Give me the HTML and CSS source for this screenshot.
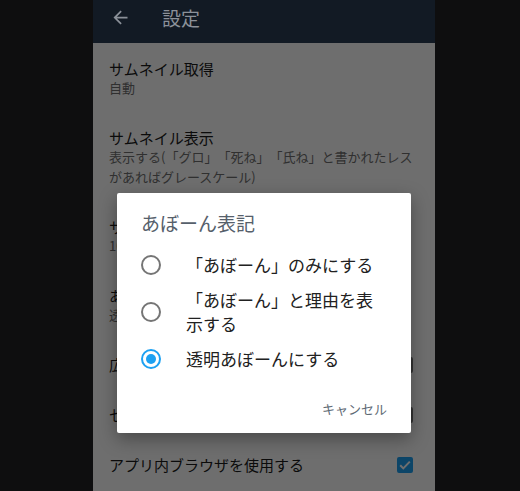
FILE: index.html
```html
<!DOCTYPE html>
<html lang="ja">
<head>
<meta charset="utf-8">
<title>設定</title>
<link rel="stylesheet" href="styles.css">
</head>
<body>
<div class="screen">
  <header class="appbar">
    <svg class="back" viewBox="0 0 24 24" aria-hidden="true"><path d="M20 11H7.83l5.59-5.59L12 4l-8 8 8 8 1.41-1.41L7.83 13H20v-2z"/></svg>
    <span class="appbar-title">設定</span>
  </header>
  <ul class="prefs">
    <li class="pref">
      <div class="pref-text">
        <div class="pref-title">サムネイル取得</div>
        <div class="pref-summary">自動</div>
      </div>
    </li>
    <li class="pref">
      <div class="pref-text">
        <div class="pref-title">サムネイル表示</div>
        <div class="pref-summary">表示する(「グロ」「死ね」「氏ね」と書かれたレスがあればグレースケール)</div>
      </div>
    </li>
    <li class="pref">
      <div class="pref-text">
        <div class="pref-title">サムネイルサイズ</div>
        <div class="pref-summary">100</div>
      </div>
    </li>
    <li class="pref">
      <div class="pref-text">
        <div class="pref-title">あぼーん表記</div>
        <div class="pref-summary">透明あぼーんにする</div>
      </div>
    </li>
    <li class="pref pref-single">
      <div class="pref-text"><div class="pref-title">広告を表示しない</div></div>
      <span class="checkbox"></span>
    </li>
    <li class="pref pref-single">
      <div class="pref-text"><div class="pref-title">セッションを保持する</div></div>
      <span class="checkbox"></span>
    </li>
    <li class="pref pref-single">
      <div class="pref-text"><div class="pref-title">アプリ内ブラウザを使用する</div></div>
      <span class="checkbox checkbox-on"><svg viewBox="0 0 16 16" aria-hidden="true"><path d="M3.2 8.3l3.1 3.1 6.5-6.8"/></svg></span>
    </li>
  </ul>
  <div class="scrim"></div>
  <div class="dialog" role="dialog">
    <h2 class="dialog-title">あぼーん表記</h2>
    <ul class="options">
      <li class="option"><span class="radio"></span><span class="option-label">「あぼーん」のみにする</span></li>
      <li class="option"><span class="radio"></span><span class="option-label">「あぼーん」と理由を表示する</span></li>
      <li class="option"><span class="radio radio-on"></span><span class="option-label">透明あぼーんにする</span></li>
    </ul>
    <div class="actions">
      <button class="btn">キャンセル</button>
    </div>
  </div>
</div>
</body>
</html>
```
FILE: styles.css
```css
* { box-sizing: border-box; }
body {
  margin: 0;
  background: #0e0e0f;
  font-family: "Noto Sans CJK JP", "Noto Sans", sans-serif;
  text-spacing-trim: space-all;
}
.screen {
  position: relative;
  width: 342px;
  height: 491px;
  margin-left: 93px;
  background: #fff;
  overflow: hidden;
}
.appbar {
  height: 43px;
  background: #121a24;
  display: flex;
  align-items: center;
  padding: 0 0 8px 17px;
}
.back {
  width: 21px;
  height: 21px;
  fill: #8a9098;
  flex: none;
}
.appbar-title {
  margin-left: 31px;
  font-size: 19px;
  line-height: 24px;
  color: #8b9199;
}
.prefs {
  list-style: none;
  margin: 0;
  padding: 0;
}
.pref {
  display: flex;
  align-items: center;
  padding: 17px 16px 14px 16px;
}
.pref-single {
  padding-bottom: 15px;
}
.pref-text {
  flex: 1;
  min-width: 0;
}
.pref-title {
  font-size: 15px;
  line-height: 18px;
  color: #1a1a1a;
  white-space: nowrap;
}
.pref-summary {
  font-size: 13px;
  line-height: 20px;
  color: #6f6f6f;
}
.checkbox {
  flex: none;
  width: 16px;
  height: 16px;
  margin-right: 6px;
  border: 2px solid #757575;
  border-radius: 2px;
  display: flex;
  align-items: center;
  justify-content: center;
}
.checkbox-on {
  background: #1da1f2;
  border-color: #1da1f2;
}
.checkbox svg {
  width: 16px;
  height: 16px;
  flex: none;
  fill: none;
  stroke: #fff;
  stroke-width: 2;
}
.scrim {
  position: absolute;
  top: 43px;
  left: 0;
  right: 0;
  bottom: 0;
  background: rgba(0, 0, 0, 0.57);
}
.dialog {
  position: absolute;
  left: 24px;
  top: 193px;
  width: 294px;
  background: #fff;
  border-radius: 2px;
  box-shadow: 0 6px 18px rgba(0, 0, 0, 0.35);
  padding: 18px 0 6px;
}
.dialog-title {
  margin: 0 24px 11px;
  font-size: 19px;
  line-height: 24px;
  font-weight: 400;
  color: #56606b;
}
.options {
  list-style: none;
  margin: 0;
  padding: 0;
}
.option {
  display: flex;
  align-items: center;
  min-height: 40px;
  padding: 3px 24px;
}
.option:first-child {
  margin-top: -1px;
}
.radio {
  flex: none;
  width: 20px;
  height: 20px;
  border: 2px solid #757575;
  border-radius: 50%;
  display: flex;
  align-items: center;
  justify-content: center;
}
.radio-on {
  border-color: #1da1f2;
}
.radio-on::after {
  content: "";
  width: 10px;
  height: 10px;
  border-radius: 50%;
  background: #1da1f2;
}
.option-label {
  margin-left: 25px;
  font-size: 17px;
  line-height: 24px;
  color: #212121;
}
.actions {
  display: flex;
  justify-content: flex-end;
  margin-top: 12px;
  padding: 0 16px;
}
.btn {
  height: 36px;
  padding: 0 8px;
  border: 0;
  background: none;
  font-family: inherit;
  font-size: 13px;
  line-height: 36px;
  color: #5f6b76;
}
```
